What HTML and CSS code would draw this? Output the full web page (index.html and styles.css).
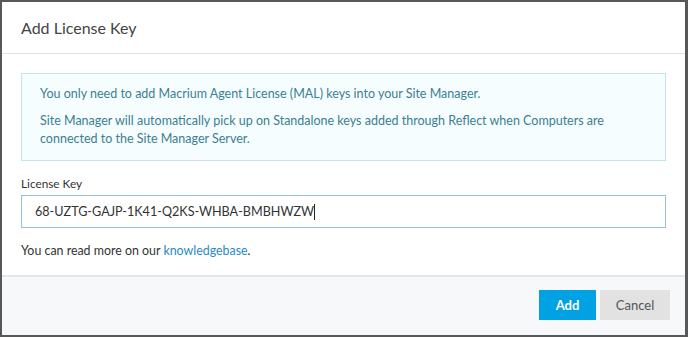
FILE: index.html
```html
<!DOCTYPE html>
<html lang="en">
<head>
    <meta charset="UTF-8">
    <title>Add License Key</title>
    <link rel="stylesheet" href="styles.css">
</head>
<body>

<div class="dialog">
    <div class="dialog-header">
        <h2>Add License Key</h2>
    </div>

    <div class="dialog-body">
        <div class="info-box">
            <p>You only need to add Macrium Agent License (MAL) keys into your Site Manager.</p>
            <p>Site Manager will automatically pick up on Standalone keys added through Reflect when Computers are connected to the Site Manager Server.</p>
        </div>

        <label class="field-label" for="licenseKey">License Key</label>
        <div class="key-input" id="licenseKey">68-UZTG-GAJP-1K41-Q2KS-WHBA-BMBHWZW<span class="caret"></span></div>

        <p class="hint">You can read more on our <a href="#">knowledgebase</a>.</p>
    </div>

    <div class="dialog-footer">
        <button class="btn btn-add">Add</button>
        <button class="btn btn-cancel">Cancel</button>
    </div>
</div>

</body>
</html>
```

FILE: styles.css
```css
html, body {
    margin: 0;
    padding: 0;
}

body {
    font-family: Lato, 'Open Sans', Arial, sans-serif;
    background-color: #fff;
    color: #333;
}

.dialog {
    width: 688px;
    height: 337px;
    box-sizing: border-box;
    border: 2px solid #585858;
    border-right-width: 3px;
    background-color: #fff;
    display: flex;
    flex-direction: column;
}

.dialog-header {
    height: 51px;
    border-bottom: 1px solid #e2e2e2;
    display: flex;
    align-items: center;
    padding: 0 19px;
}

.dialog-header h2 {
    margin: 0;
    font-size: 16px;
    font-weight: normal;
    color: #444;
    padding-bottom: 1px;
}

.dialog-body {
    flex: 1;
    padding: 19px 19px 0 19px;
}

.info-box {
    background-color: #f6fdfe;
    border: 1px solid #c3e4ec;
    padding: 11px 18px 12px 18px;
    color: #3b7f92;
    font-size: 12.5px;
    line-height: 18px;
}

.info-box p {
    margin: 0;
}

.info-box p + p {
    margin-top: 9px;
}

.field-label {
    display: block;
    margin-top: 15px;
    font-size: 11.8px;
    color: #333;
    line-height: 16px;
}

.key-input {
    margin-top: 3px;
    height: 33px;
    box-sizing: border-box;
    border: 1px solid #92c2e0;
    padding: 0 13px;
    display: flex;
    align-items: center;
    font-size: 12.6px;
    color: #333;
}

.caret {
    display: inline-block;
    width: 1px;
    height: 16px;
    background-color: #222;
}

.hint {
    margin: 15px 0 0 0;
    font-size: 12.4px;
    color: #333;
}

.hint a {
    color: #2a88c8;
    text-decoration: none;
}

.dialog-footer {
    height: 56px;
    border-top: 2px solid #e6e6e6;
    background-color: #f7f8fa;
    display: flex;
    justify-content: flex-end;
    align-items: center;
    gap: 4px;
    padding: 0 15px 2px 0;
}

.btn {
    height: 30px;
    border: none;
    font-family: inherit;
    font-size: 13px;
    cursor: pointer;
}

.btn-add {
    width: 57px;
    background-color: #00a2e3;
    color: #fff;
    font-weight: bold;
}

.btn-cancel {
    width: 70px;
    background-color: #e2e2e2;
    color: #555;
}
```
